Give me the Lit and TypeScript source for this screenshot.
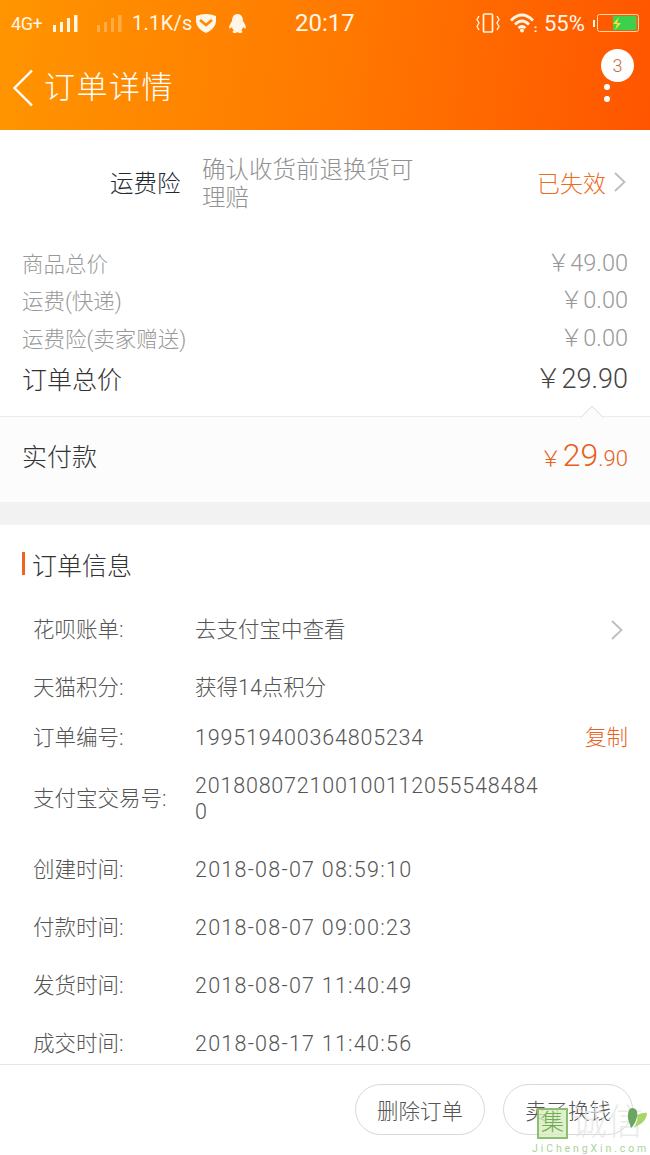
import { LitElement, html, css, svg } from "lit";
import { customElement } from "lit/decorators.js";

const chevron = svg`<svg class="chev" width="14" height="22" viewBox="0 0 14 22"><path d="M2 2l9.500 9L2 20" fill="none" stroke="#bdbdbd" stroke-width="1.800"/></svg>`;

@customElement("app-root")
export class AppRoot extends LitElement {
  static styles = css`
    :host { display: block; width: 650px; height: 1155px; overflow: hidden; position: relative; background: #fff;
      font-family: Roboto, "Noto Sans CJK SC", sans-serif; font-weight: 300; color: #333; }
    .top { height: 130px; box-sizing: border-box; background: linear-gradient(98deg, #ff9500 0%, #ff7a00 50%, #ff5500 100%); color: #fff6e8; display: flex; flex-direction: column; }
    .status { height: 46px; display: flex; align-items: center; font-size: 20px; font-weight: 400; padding-left: 11px; position: relative; }
    .status .g { font-size: 18px; letter-spacing: -0.4px; width: 41px; flex: none; }
    .status .speed { margin-left: 10px; letter-spacing: 0.3px; width: 63px; flex: none; }
    .status .clock { font-size: 24px; margin-left: 48px; width: 181px; flex: none; }
    .status .pct { font-size: 22px; margin-left: 6px; width: 49px; flex: none; }
    .status svg { flex: none; display: block; }
    .sig2 { margin-left: 18px; }
    .qq { margin-left: 11px; }
    .wifi { margin-left: 10px; }
    .nav { flex: 1; display: flex; align-items: center; padding-left: 12px; position: relative; }
    .nav h1 { margin: 0 0 0 10px; font-size: 31px; font-weight: 300; color: #fff; letter-spacing: 1.500px; line-height: 40px; }
    .badge { position: absolute; left: 601px; top: 3px; width: 33px; height: 33px; border-radius: 50%; background: #fff; color: #c8703c; font-size: 18px; display: flex; align-items: center; justify-content: center; }
    .dots { position: absolute; left: 604px; top: 38px; width: 6px; display: flex; flex-direction: column; gap: 6px; }
    .dots i { width: 6px; height: 6px; border-radius: 50%; background: #fff; }

    .ins { height: 101px; display: flex; align-items: center; box-sizing: border-box; padding: 3px 23px 0 110px; }
    .ins .name { width: 92px; font-size: 23.500px; color: #1f2a33; flex: none; }
    .ins .desc { width: 222px; font-size: 23.500px; line-height: 28px; color: #919191; flex: none; margin-top: 4px; }
    .ins .state { margin-left: auto; font-size: 23px; color: #ee6a1e; display: flex; align-items: center; gap: 7px; }
    .ins .state svg { display: block; }

    .costs { padding: 12.500px 22px 0; }
    .cost { display: flex; justify-content: space-between; align-items: center; height: 37.500px; font-size: 21.500px; color: #999; }
    .cost .v { font-size: 23.500px; padding-bottom: 3px; }
    .cost.total { height: 44px; color: #333; font-size: 25px; }
    .cost.total .v { font-size: 27px; color: #444; }

    .paid { margin-top: 15.500px; height: 86px; background: #fcfcfc; border-top: 1px solid #ececec; display: flex; align-items: center; justify-content: space-between; padding: 0 22px 8px; position: relative; box-sizing: border-box; font-size: 25px; color: #333; }
    .paid .caret { position: absolute; right: 49px; top: -9px; width: 17px; height: 17px; transform: rotate(45deg) scale(0.9); background: #fcfcfc; border-top: 1px solid #e4e4e4; border-left: 1px solid #e4e4e4; }
    .paid .amt { color: #e8611c; font-size: 22px; position: relative; display: flex; align-items: baseline; }
    .paid .amt b { font-weight: 300; font-size: 32px; margin-left: 1px; }

    .gap { height: 23px; background: #f2f2f2; }

    .head { height: 82px; box-sizing: border-box; padding: 0 0 4px 22px; display: flex; align-items: center; font-size: 25px; color: #333; }
    .head i { width: 3px; height: 23px; background: #f0641e; margin-right: 7px; }

    .rows { padding-left: 33px; font-size: 21.500px; color: #555; line-height: 26px; }
    .row { display: flex; align-items: center; position: relative; }
    .row .k { width: 162px; flex: none; }
    .row .val { width: 350px; word-break: break-all; color: #555; }
    .row .val.num { letter-spacing: 0.800px; }
    .row .val.time { letter-spacing: 1.250px; }
    .row .end { position: absolute; right: 22px; display: flex; }
    .row .end.c { right: 26px; }
    .copy { color: #e8611c; }

    .bar { position: absolute; left: 0; right: 0; bottom: 0; height: 91px; background: #fff; border-top: 1px solid #e6e6e6; box-sizing: border-box; display: flex; justify-content: flex-end; gap: 18px; padding: 19px 17px 0 0; }
    .btn { width: 130px; height: 51px; box-sizing: border-box; border: 1px solid #d8d8d8; border-radius: 26px; font-size: 21.500px; color: #555; display: flex; align-items: center; justify-content: center; }

    .mark { position: absolute; left: 532px; top: 1105px; width: 118px; height: 50px; pointer-events: none; }
    .mark .t { display: flex; align-items: center; height: 36px; font-size: 36px; line-height: 36px; color: #e4e6e4cc; position: relative; }
    .mark .box { width: 31px; height: 31px; border: 2px solid #8dbf73; background: #d6edbdcc; box-sizing: border-box; font-size: 23px; line-height: 26px; text-align: center; color: #75a95a; margin: 0 3px 0 5px; flex: none; }
    .mark .nm { white-space: nowrap; margin-right: -10px; }
    .mark .u { font-size: 10.500px; font-weight: 400; letter-spacing: 2.900px; line-height: 10px; color: #a9d49a; white-space: nowrap; margin-top: 3px; }
    .leaf { position: absolute; left: 96px; top: 3px; }
  `;

  private row(k: string, v: string, h: number, end?: unknown, cls = "", endClass = "") {
    return html`<div class="row" style="height:${h}px"><div class="k">${k}</div><div class="val ${cls}">${v}</div>${end ? html`<div class="end ${endClass}">${end}</div>` : ""}</div>`;
  }

  render() {
    const bars = svg`<rect x="1" y="11" width="3" height="7"/><rect x="8" y="8" width="3" height="10"/><rect x="15" y="4" width="3" height="14"/><rect x="22" y="1" width="3.500" height="17"/>`;
    return html`
      <div class="top">
        <div class="status">
          <span class="g">4G+</span>
          <svg width="26" height="18" viewBox="0 0 26 18" fill="#fff6e8">${bars}</svg>
          <svg class="sig2" width="26" height="18" viewBox="0 0 26 18" fill="#fff6e8" opacity=".3">${bars}</svg>
          <span class="speed">1.1K/s</span>
          <svg width="22" height="21" viewBox="0 0 22 21"><path d="M1 3Q11-1 21 3V9Q20 16 11 20 2 16 1 9Z" fill="#fff6e8"/><path d="M5 7l6 5 6-5" fill="none" stroke="#ff8a00" stroke-width="2.600"/></svg>
          <svg class="qq" width="19" height="21" viewBox="0 0 19 21"><path d="M9.500 1C5 1 4 5 4 8 3 10 1 12 1 15c1 1 2 0 3-1 .5 2 1 3 2 3.500C4 18 4 20 7 20c1 0 2-.5 2.500-1 .5.500 1.500 1 2.500 1 3 0 3-2 1-2.500 1-.5 1.500-1.500 2-3.500 1 1 2 2 3 1 0-3-2-5-3-7 0-3-1-7-5.500-7Z" fill="#fff6e8"/></svg>
          <span class="clock">20:17</span>
          <svg width="24" height="20" viewBox="0 0 24 20" fill="none" stroke="#fff6e8" stroke-width="1.700"><rect x="7.500" y="1" width="9" height="18" rx="1"/><path d="M3 3L1 6.500 3 10 1 13.500 3 17M21 3l2 3.500L21 10l2 3.500L21 17" stroke-width="1.300"/></svg>
          <svg class="wifi" width="28" height="20" viewBox="0 0 28 20" fill="none" stroke="#fff6e8" stroke-width="2.800"><path d="M1 7.500Q12-3.500 23 7.500M5 11.500Q12 4.500 19 11.500M8.500 15Q12 12 15.500 15"/><circle cx="12" cy="17.500" r="2" fill="#fff6e8" stroke="none"/><path d="M25.500 13.500v1.600M25.500 17.500v1.600" stroke-width="2"/></svg>
          <span class="pct">55%</span>
          <svg width="46" height="19" viewBox="0 0 46 19"><rect x="0" y="6" width="2" height="7" fill="#fff6e8"/><rect x="4.500" y=".5" width="41" height="17" rx="2" fill="#ff5a00" stroke="#ffd9a8"/><rect x="20" y="2" width="23.500" height="14" fill="#3ed04c"/><path d="M26 3l-6 7h4l-2 6 6-7h-4z" fill="#f5e23a"/></svg>
        </div>
        <div class="nav">
          <svg width="22" height="38" viewBox="0 0 22 38"><path d="M20 1.500L2.500 19 20 36.500" fill="none" stroke="#fff" stroke-width="2.400"/></svg>
          <h1>订单详情</h1>
          <div class="badge">3</div>
          <div class="dots"><i></i><i></i></div>
        </div>
      </div>

      <div class="ins">
        <div class="name">运费险</div>
        <div class="desc">确认收货前退换货可理赔</div>
        <div class="state">已失效 ${chevron}</div>
      </div>

      <div class="costs">
        <div class="cost"><span>商品总价</span><span class="v">￥49.00</span></div>
        <div class="cost"><span>运费(快递)</span><span class="v">￥0.00</span></div>
        <div class="cost"><span>运费险(卖家赠送)</span><span class="v">￥0.00</span></div>
        <div class="cost total"><span>订单总价</span><span class="v">￥29.90</span></div>
      </div>

      <div class="paid">
        <div class="caret"></div>
        <span>实付款</span>
        <span class="amt">￥<b>29</b>.90</span>
      </div>
      <div class="gap"></div>

      <div class="head"><i></i>订单信息</div>
      <div class="rows">
        ${this.row("花呗账单:", "去支付宝中查看", 46, chevron, "", "c")}
        ${this.row("天猫积分:", "获得14点积分", 70)}
        ${this.row("订单编号:", "199519400364805234", 30, html`<span class="copy">复制</span>`, "num")}
        ${this.row("支付宝交易号:", "2018080721001001120555484840", 93, undefined, "num")}
        ${this.row("创建时间:", "2018-08-07 08:59:10", 48, undefined, "time")}
        ${this.row("付款时间:", "2018-08-07 09:00:23", 68, undefined, "time")}
        ${this.row("发货时间:", "2018-08-07 11:40:49", 48, undefined, "time")}
        ${this.row("成交时间:", "2018-08-17 11:40:56", 68, undefined, "time")}
      </div>

      <div class="bar">
        <div class="btn">删除订单</div>
        <div class="btn">卖了换钱</div>
      </div>
      <div class="mark">
        <div class="t"><span class="box">集</span><span class="nm">诚信</span>
          <svg class="leaf" width="20" height="22" viewBox="0 0 20 22"><path d="M4 0C9 0 10 5 9 9 8 14 5 18 3 20 2 15-1 12 0 6 .5 2 2 0 4 0Z" fill="#6aa564"/><path d="M9 7C12 6 16 4 19 5 19 11 14 17 6 19 9 15 10 11 9 7Z" fill="#a8d56a"/></svg>
        </div>
        <div class="u">JiChengXin.com</div>
      </div>
    `;
  }
}
